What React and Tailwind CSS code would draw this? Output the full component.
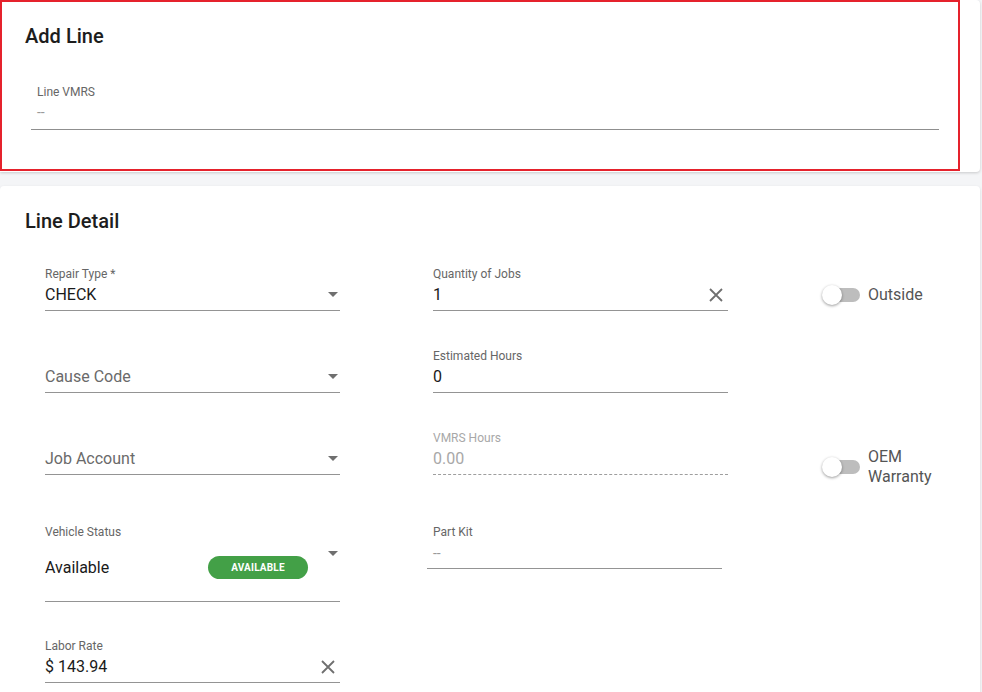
import React from "react";

const Caret = () => (
  <svg width="10" height="5" viewBox="0 0 10 5" className="shrink-0">
    <path d="M0 0 L10 0 L5 5 Z" fill="#6f6f6f" />
  </svg>
);

const Clear = () => (
  <svg width="14" height="14" viewBox="0 0 14 14" className="shrink-0">
    <path d="M1 1 L13 13 M13 1 L1 13" stroke="#6f6f6f" strokeWidth="1.8" />
  </svg>
);

const Toggle = () => (
  <div className="relative w-[38px] h-[20px] shrink-0">
    <div className="absolute left-[4px] top-[3px] w-[34px] h-[14px] rounded-full bg-[#bdbdbd]" />
    <div className="absolute left-0 top-0 w-[20px] h-[20px] rounded-full bg-white shadow-[0_1px_3px_rgba(0,0,0,0.4)]" />
  </div>
);

const Field = ({ label, value, placeholder, icon, muted, dotted }) => (
  <div className="w-[295px]">
    <div className={`h-4 text-xs leading-4 ${muted ? "text-[#a8a8a8]" : "text-[#666]"}`}>
      {label}
    </div>
    <div
      className={`flex items-center h-[29px] pb-[3px] border-b ${
        dotted ? "border-dashed border-[#9e9e9e]" : "border-[#949494]"
      }`}
    >
      <span
        className={`flex-1 text-base ${
          placeholder ? "text-[#6a6a6a]" : muted ? "text-[#a8a8a8]" : "text-[#1a1a1a]"
        }`}
      >
        {value || placeholder}
      </span>
      {icon === "caret" && <span className="mr-[2px]"><Caret /></span>}
      {icon === "clear" && <span className="mr-[5px]"><Clear /></span>}
    </div>
  </div>
);

const titleFont = { fontFamily: "'Roboto Medium', Roboto, 'Liberation Sans', sans-serif" };

export default function App() {
  return (
    <div
      className="w-[982px] h-[692px] overflow-hidden bg-[#f4f5f7]"
      style={{ fontFamily: "Roboto, 'Liberation Sans', sans-serif" }}
    >
      {/* Add Line */}
      <div className="w-[980px] h-[172px] bg-white rounded-r shadow-[0_1px_3px_rgba(0,0,0,0.18)]">
        <div className="w-[960px] h-[171px] border-2 border-[#e5222c] pt-[22px] px-[23px]">
          <h2 className="text-[20px] leading-6 font-medium text-[#1d1d1d]" style={titleFont}>
            Add Line
          </h2>
          <div className="mt-[36px] ml-[6px] w-[908px]">
            <div className="px-[6px] text-xs leading-4 text-[#666]">Line VMRS</div>
            <div className="h-[30px] px-[6px] pb-[6px] flex items-center border-b border-[#8f8f8f] text-sm text-[#9a9a9a]">
              --
            </div>
          </div>
        </div>
      </div>

      {/* Line Detail */}
      <div className="mt-[14px] w-[980px] h-[520px] bg-white rounded shadow-[0_1px_3px_rgba(0,0,0,0.12)] pt-[21px] pl-[25px]">
        <h2 className="text-[20px] leading-7 font-medium text-[#1d1d1d]" style={titleFont}>
          Line Detail
        </h2>

        <div className="pl-[20px] mt-[31px] flex flex-col">
          {/* row 1 */}
          <div className="flex items-start gap-[93px] h-[45px]">
            <Field label="Repair Type *" value="CHECK" icon="caret" />
            <Field label="Quantity of Jobs" value="1" icon="clear" />
            <div className="flex items-center gap-[8px] ml-[1px] mt-[17px]">
              <Toggle />
              <span className="text-base text-[#555]">Outside</span>
            </div>
          </div>

          {/* row 2 */}
          <div className="flex items-start gap-[93px] h-[45px] mt-[37px]">
            <Field placeholder="Cause Code" icon="caret" />
            <Field label="Estimated Hours" value="0" />
          </div>

          {/* row 3 */}
          <div className="flex items-start gap-[93px] h-[45px] mt-[37px]">
            <Field placeholder="Job Account" icon="caret" />
            <Field label="VMRS Hours" value="0.00" muted dotted />
            <div className="flex items-center gap-[8px] ml-[1px] mt-[17px]">
              <Toggle />
              <span className="text-base leading-5 text-[#555] w-[70px]">OEM Warranty</span>
            </div>
          </div>

          {/* row 4 */}
          <div className="flex items-start gap-[87px] mt-[49px]">
            <div className="w-[295px]">
              <div className="h-4 text-xs leading-4 text-[#666]">Vehicle Status</div>
              <div className="relative h-[62px] border-b border-[#949494] flex items-center pb-[6px]">
                <span className="flex-1 text-base text-[#1a1a1a]">Available</span>
                <span className="mr-[32px] w-[100px] h-[23px] rounded-full bg-[#43a047] text-white text-[10px] font-bold flex items-center justify-center tracking-[0.2px]">
                  AVAILABLE
                </span>
                <span className="absolute right-[2px] top-[11px]"><Caret /></span>
              </div>
            </div>
            <div className="w-[295px]">
              <div className="h-4 px-[6px] text-xs leading-4 text-[#666]">Part Kit</div>
              <div className="h-[29px] px-[6px] pb-[3px] flex items-center border-b border-[#949494] text-sm text-[#9a9a9a]">
                --
              </div>
            </div>
          </div>

          {/* row 5 */}
          <div className="flex items-start mt-[36px]">
            <Field label="Labor Rate" value="$ 143.94" icon="clear" />
          </div>
        </div>
      </div>
    </div>
  );
}
